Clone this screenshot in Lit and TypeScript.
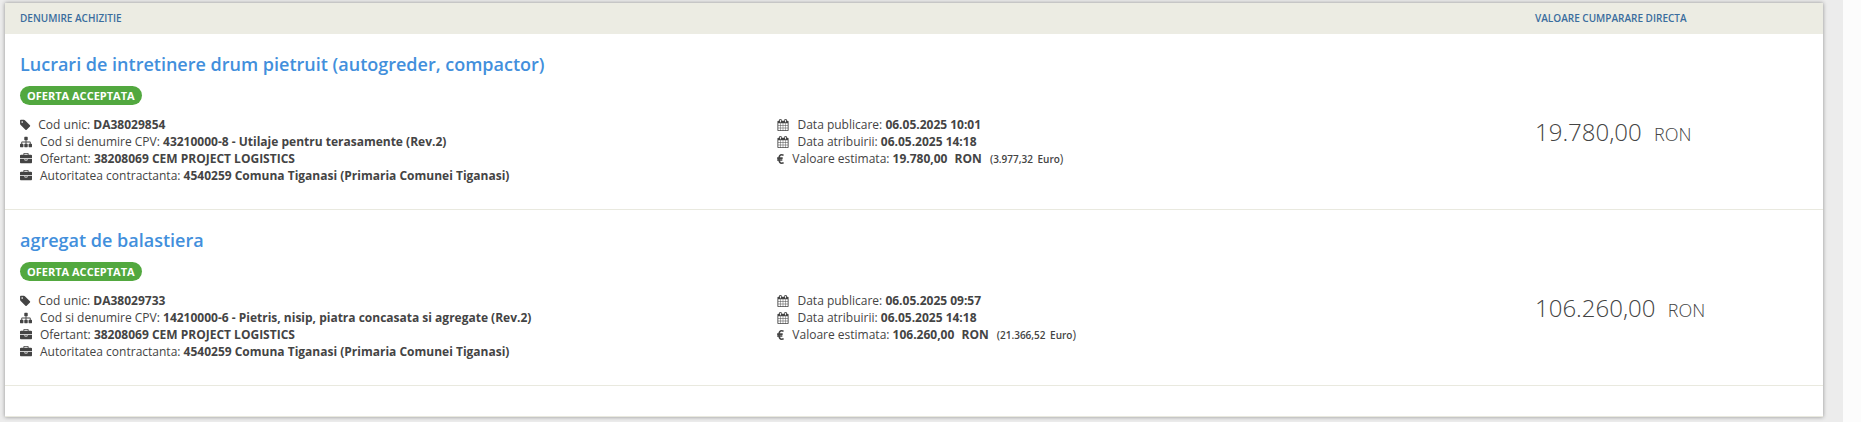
import { LitElement, html, css, svg } from "lit";
import { customElement, property } from "lit/decorators.js";

const ICONS: Record<string, { width: number; shape: unknown }> = {
  tag: {
    width: 1536,
    shape: svg`<path d="M576 448q0-53-37.5-90.5t-90.5-37.5-90.5 37.5-37.5 90.5 37.5 90.5 90.5 37.5 90.5-37.5 37.5-90.5zm1067 576q0 53-37 90l-491 492q-39 37-91 37-53 0-90-37l-715-716q-38-37-64.5-101t-26.5-117v-416q0-52 38-90t90-38h416q53 0 117 26.5t102 64.5l715 714q37 39 37 91z" transform="translate(-120 0)"/>`,
  },
  sitemap: {
    width: 1792,
    shape: svg`<path d="M1792 1248v320q0 40-28 68t-68 28h-320q-40 0-68-28t-28-68v-320q0-40 28-68t68-28h96v-192h-512v192h96q40 0 68 28t28 68v320q0 40-28 68t-68 28h-320q-40 0-68-28t-28-68v-320q0-40 28-68t68-28h96v-192h-512v192h96q40 0 68 28t28 68v320q0 40-28 68t-68 28h-320q-40 0-68-28t-28-68v-320q0-40 28-68t68-28h96v-192q0-52 38-90t90-38h512v-192h-96q-40 0-68-28t-28-68v-320q0-40 28-68t68-28h320q40 0 68 28t28 68v320q0 40-28 68t-68 28h-96v192h512q52 0 90 38t38 90v192h96q40 0 68 28t28 68z"/>`,
  },
  briefcase: {
    width: 1792,
    shape: svg`<path d="M640 256h512v-128h-512v128zm1152 640v480q0 66-47 113t-113 47h-1472q-66 0-113-47t-47-113v-480h672v160q0 26 19 45t45 19h320q26 0 45-19t19-45v-160h672zm-768 0v128h-256v-128h256zm768-480v384h-1792v-384q0-66 47-113t113-47h352v-160q0-40 28-68t68-28h576q40 0 68 28t28 68v160h352q66 0 113 47t47 113z"/>`,
  },
  calendar: {
    width: 1792,
    shape: svg`<path d="M192 1664h288v-288h-288v288zm352 0h320v-288h-320v288zm-352-352h288v-320h-288v320zm352 0h320v-320h-320v320zm-352-384h288v-288h-288v288zm736 736h320v-288h-320v288zm-384-736h320v-288h-320v288zm768 736h288v-288h-288v288zm-384-352h320v-320h-320v320zm-352-864v-288q0-13-9.5-22.5t-22.5-9.5h-64q-13 0-22.5 9.5t-9.5 22.5v288q0 13 9.5 22.5t22.5 9.5h64q13 0 22.5-9.5t9.5-22.5zm736 864h288v-320h-288v320zm-384-384h320v-288h-320v288zm384 0h288v-288h-288v288zm32-480v-288q0-13-9.5-22.5t-22.5-9.5h-64q-13 0-22.5 9.5t-9.5 22.5v288q0 13 9.5 22.5t22.5 9.5h64q13 0 22.5-9.5t9.5-22.5zm384-64v1280q0 52-38 90t-90 38h-1408q-52 0-90-38t-38-90v-1280q0-52 38-90t90-38h128v-96q0-66 47-113t113-47h64q66 0 113 47t47 113v96h384v-96q0-66 47-113t113-47h64q66 0 113 47t47 113v96h128q52 0 90 38t38 90z"/>`,
  },
  euro: {
    width: 1024,
    shape: svg`<path d="M980 350Q860 270 720 270 300 270 300 896T720 1522Q860 1522 990 1440M20 760H850M20 1040H800" fill="none" stroke="currentColor" stroke-width="240"/>`,
  },
};

interface Purchase {
  title: string;
  code: string;
  cpv: string;
  bidder: string;
  authority: string;
  published: string;
  awarded: string;
  value: string;
  euro: string;
}

const PURCHASES: Purchase[] = [
  {
    title: "Lucrari de intretinere drum pietruit (autogreder, compactor)",
    code: "DA38029854",
    cpv: "43210000-8 - Utilaje pentru terasamente (Rev.2)",
    bidder: "38208069 CEM PROJECT LOGISTICS",
    authority: "4540259 Comuna Tiganasi (Primaria Comunei Tiganasi)",
    published: "06.05.2025 10:01",
    awarded: "06.05.2025 14:18",
    value: "19.780,00",
    euro: "3.977,32",
  },
  {
    title: "agregat de balastiera",
    code: "DA38029733",
    cpv: "14210000-6 - Pietris, nisip, piatra concasata si agregate (Rev.2)",
    bidder: "38208069 CEM PROJECT LOGISTICS",
    authority: "4540259 Comuna Tiganasi (Primaria Comunei Tiganasi)",
    published: "06.05.2025 09:57",
    awarded: "06.05.2025 14:18",
    value: "106.260,00",
    euro: "21.366,52",
  },
];

@customElement("fa-icon")
class FaIcon extends LitElement {
  @property() name = "tag";

  static styles = css`
    :host { display: inline-flex; flex: none; }
    svg { display: block; height: 12px; width: auto; fill: currentColor; overflow: visible; }
  `;

  render() {
    const icon = ICONS[this.name];
    return html`<svg viewBox="0 0 ${icon.width} 1792" aria-hidden="true">${icon.shape}</svg>`;
  }
}

@customElement("app-root")
class AppRoot extends LitElement {
  static styles = css`
    :host {
      display: block;
      box-sizing: border-box;
      min-height: 100vh;
      padding: 3px 20px 5px 5px;
      background: #ececec;
      border-right: 18px solid #fcfcfc;
      font-family: "Open Sans", sans-serif;
      font-size: 12px;
      line-height: 17px;
      color: #444;
    }
    .panel {
      background: #fff;
      padding-bottom: 30px;
      border-bottom: 1px solid #e9e9df;
      box-shadow: 0 0 4px rgba(0, 0, 0, 0.4);
    }
    table { width: 100%; table-layout: fixed; border-collapse: collapse; }
    th {
      box-sizing: border-box;
      padding: 7px 15px;
      background: #ecece3;
      color: #3a6d9e;
      font-size: 10px;
      font-weight: 600;
      text-align: left;
      text-transform: uppercase;
    }
    .main { width: 83.333%; }
    td { padding: 0; border-bottom: 1px solid #e9e9df; }
    .entry { padding: 17px 0 25px; }
    h2 { margin: 0 15px; font-size: 18px; line-height: 26px; font-weight: 600; }
    h2 a { color: #428fdc; text-decoration: none; }
    .badge {
      display: inline-block;
      margin: 9px 15px 11px;
      padding: 1px 7px;
      border-radius: 10px;
      background: #52a83f;
      color: #fff;
      font-size: 11px;
      font-weight: 700;
      line-height: 17px;
    }
    .details { display: grid; grid-template-columns: 1fr 1fr; }
    ul { list-style: none; margin: 0; padding: 0 15px; }
    li { display: flex; align-items: center; gap: 8px; white-space: nowrap; }
    b { font-weight: 700; }
    .currency { margin-left: 4px; }
    .euro { margin-left: 5px; font-size: 10px; font-weight: 600; }
    .euro span { margin-left: 2px; }
    .amount { padding: 23px 15px 0; font-size: 24px; line-height: 32px; font-weight: 300; white-space: nowrap; }
    .amount small { margin-left: 6px; font-size: 18px; }
  `;

  private line(icon: string, label: string, value: unknown) {
    return html`<li><fa-icon name=${icon}></fa-icon><span>${label}: ${value}</span></li>`;
  }

  private row(p: Purchase) {
    return html`<tr>
      <td>
        <div class="entry">
          <h2><a href="#${p.code}">${p.title}</a></h2>
          <span class="badge">OFERTA ACCEPTATA</span>
          <div class="details">
            <ul>
              ${this.line("tag", "Cod unic", html`<b>${p.code}</b>`)}
              ${this.line("sitemap", "Cod si denumire CPV", html`<b>${p.cpv}</b>`)}
              ${this.line("briefcase", "Ofertant", html`<b>${p.bidder}</b>`)}
              ${this.line("briefcase", "Autoritatea contractanta", html`<b>${p.authority}</b>`)}
            </ul>
            <ul>
              ${this.line("calendar", "Data publicare", html`<b>${p.published}</b>`)}
              ${this.line("calendar", "Data atribuirii", html`<b>${p.awarded}</b>`)}
              ${this.line("euro", "Valoare estimata", html`<b>${p.value} <span class="currency">RON</span> <span class="euro">(${p.euro} <span>Euro</span></span></b>)`)}
            </ul>
          </div>
        </div>
      </td>
      <td><div class="amount">${p.value} <small>RON</small></div></td>
    </tr>`;
  }

  render() {
    return html`<div class="panel">
      <table>
        <thead>
          <tr><th class="main" scope="col">Denumire achizitie</th><th scope="col">Valoare cumparare directa</th></tr>
        </thead>
        <tbody>${PURCHASES.map((p) => this.row(p))}</tbody>
      </table>
    </div>`;
  }
}
